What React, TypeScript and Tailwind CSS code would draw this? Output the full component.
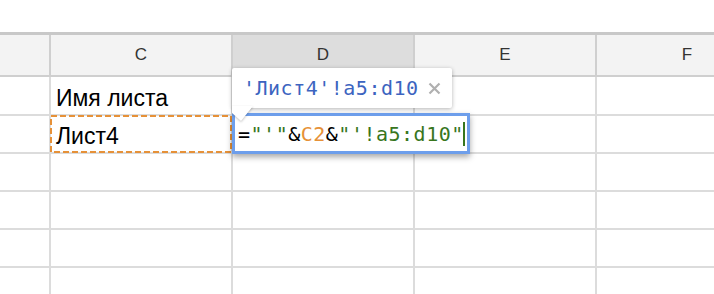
import React from "react";

const cols = ["", "C", "D", "E", "F"];
const rowHeights = ["h-[39px]", "h-[38px]", "h-[38px]", "h-[38px]", "h-[38px]", "h-[38px]"];

function Cell({ children, className = "" }: { children?: React.ReactNode; className?: string }) {
  return (
    <div className={`relative border-r-2 border-b-2 border-[#dcdcdc] flex items-end pl-[5px] pb-[2px] ${className}`}>
      {children}
    </div>
  );
}

export default function App() {
  return (
    <div
      className="relative w-[714px] h-[294px] overflow-hidden bg-white"
      style={{ fontFamily: '"Liberation Sans", Arial, sans-serif' }}
    >
      <div className="h-[32px]" />
      <div className="border-t-[3px] border-[#c8c8c8]">
        {/* header */}
        <div className="grid grid-cols-[51px_182px_182px_182px_182px] h-[42px]">
          {cols.map((c, i) => (
            <div
              key={i}
              className={`flex items-center justify-center border-r-2 border-b-2 border-[#cfcfcf] text-[17px] text-[#333] ${
                c === "D" ? "bg-[#dddddd]" : "bg-[#f3f3f3]"
              }`}
            >
              {c}
            </div>
          ))}
        </div>
        {rowHeights.map((h, r) => (
          <div key={r} className={`grid grid-cols-[51px_182px_182px_182px_182px] ${h}`}>
            <Cell />
            <Cell>
              {r === 0 && <span className="text-[23px] leading-[27px] text-black">Имя листа</span>}
              {r === 1 && (
                <>
                  <span className="text-[23px] leading-[27px] text-black">Лист4</span>
                  <svg className="absolute left-[-1px] top-[-1px]" width="183" height="39">
                    <rect
                      x="1"
                      y="1"
                      width="180"
                      height="36"
                      fill="none"
                      stroke="#e69138"
                      strokeWidth="2"
                      strokeDasharray="6 3"
                    />
                  </svg>
                </>
              )}
            </Cell>
            <Cell />
            <Cell />
            <Cell />
          </div>
        ))}
      </div>

      {/* formula editor */}
      <div className="absolute left-[232px] top-[113px] w-[238px] h-[41px] border-[3px] border-[#6d9eeb] bg-white shadow-[0_3px_6px_rgba(0,0,0,0.35)] flex items-center pl-[3px]">
        <span
          className="text-[20px] leading-none tracking-[0.5px] whitespace-pre text-black"
          style={{ fontFamily: '"DejaVu Sans Mono", monospace' }}
        >
          =<span className="text-[#38761d]">"'"</span>&amp;<span className="text-[#e69138]">C2</span>&amp;
          <span className="text-[#38761d]">"'!a5:d10"</span>
        </span>
        <span className="w-[2px] h-[24px] bg-[#38761d] ml-[-1px] shrink-0" />
      </div>

      {/* tooltip */}
      <div className="absolute left-[232px] top-[68px] w-[220px] h-[40px] bg-white rounded-[2px] shadow-[0_1px_4px_rgba(0,0,0,0.3)] flex items-center pl-[11px]">
        <span
          className="text-[20px] leading-none tracking-[0.5px] text-[#3c64c0]"
          style={{ fontFamily: '"DejaVu Sans Mono", monospace' }}
        >
          'Лист4'!a5:d10
        </span>
        <svg className="ml-[9px]" width="13" height="13" viewBox="0 0 13 13">
          <path d="M1.5 1.5 L11.5 11.5 M11.5 1.5 L1.5 11.5" stroke="#b0b0b0" strokeWidth="2.2" />
        </svg>
      </div>
      <svg
        className="absolute left-[232px] top-[106px]"
        width="24"
        height="18"
        style={{ filter: "drop-shadow(0 1px 1px rgba(0,0,0,0.25))" }}
      >
        <polygon points="0,0 21,0 9,15 0,7" fill="white" />
      </svg>
    </div>
  );
}
